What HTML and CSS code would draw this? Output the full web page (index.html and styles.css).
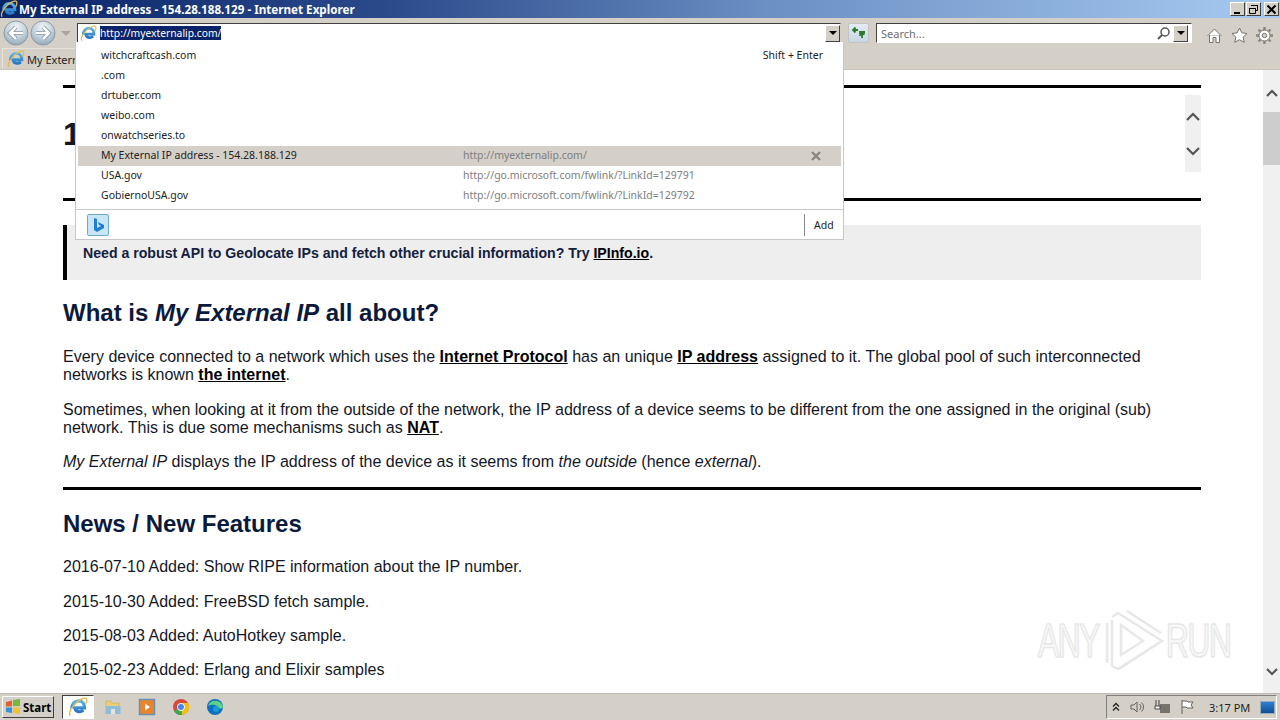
FILE: index.html
```html
<!DOCTYPE html>
<html lang="en">
<head>
<meta charset="utf-8">
<title>My External IP address</title>
<link rel="stylesheet" href="styles.css">
</head>
<body>
<svg class="defs" width="0" height="0" aria-hidden="true">
  <defs>
    <linearGradient id="ieblue" x1="0" y1="0" x2="0" y2="1"><stop offset="0" stop-color="#57b5e8"/><stop offset="1" stop-color="#2a78c4"/></linearGradient>
    <radialGradient id="gloss" cx="50%" cy="28%" r="75%"><stop offset="0" stop-color="#f4f7f9"/><stop offset="55%" stop-color="#c3d2dd"/><stop offset="100%" stop-color="#8ea6b8"/></radialGradient>
  </defs>
  <symbol id="ie" viewBox="0 0 20 20">
    <path d="M3.800 11.500C3.800 6.800 6.800 3.800 10.500 3.800s6 2.800 6 7H7c0 4.200 5 5 8.500 2.500" fill="none" stroke="url(#ieblue)" stroke-width="3.200"/>
    <path d="M2.500 18.500C-1.500 16 8 3 16 1.200c3.500-.7 3.300 3 1.300 6.500" fill="none" stroke="#e5b84c" stroke-width="1.400"/>
  </symbol>
  <symbol id="navback" viewBox="0 0 26 26">
    <circle cx="13" cy="13" r="12" fill="url(#gloss)" stroke="#8f9ba5"/>
    <path d="M20 13H8M13 7l-6 6 6 6" fill="none" stroke="#7c8c99" stroke-width="4.200"/>
    <path d="M20 13H8M13 7l-6 6 6 6" fill="none" stroke="#fff" stroke-width="2.600"/>
  </symbol>
</svg>
<div class="window">
  <header class="titlebar">
    <svg class="ico18"><use href="#ie"/></svg>
    <span class="title-text">My External IP address - 154.28.188.129 - Internet Explorer</span>
    <div class="wincontrols">
      <span class="winbtn"><svg width="11" height="11" viewBox="0 0 11 11"><rect x="2" y="8" width="6" height="2" fill="#000"/></svg></span>
      <span class="winbtn"><svg width="11" height="11" viewBox="0 0 11 11"><path d="M3.500 1.500h6v5h-2M1.500 4.500h6v5h-6z" fill="none" stroke="#000"/><path d="M3 1.500h7M1 4.500h7" stroke="#000"/></svg></span>
      <span class="winbtn"><svg width="11" height="11" viewBox="0 0 11 11"><path d="M1.500 1.500l8 8M9.500 1.500l-8 8" stroke="#000" stroke-width="2"/></svg></span>
    </div>
  </header>

  <section class="toolbar">
    <div class="navrow">
      <div class="navbtns">
        <svg class="round" width="26" height="26"><use href="#navback"/></svg>
        <svg class="round flip" width="26" height="26"><use href="#navback"/></svg>
        <span class="caret-light"></span>
      </div>
      <div class="addressbar">
        <svg class="ico16"><use href="#ie"/></svg>
        <span class="url-selected">http://myexternalip.com/</span>
        <span class="combo"><i class="caret"></i></span>
      </div>
      <span class="refresh"><svg width="16" height="14" viewBox="0 0 16 14"><path d="M7 4H2M4.500 1.500L2 4l2.500 2.500" fill="none" stroke="#2c7a2c" stroke-width="1.800"/><path d="M9 10V6h5M11 12l0-6M8.500 8.500L11 6l2.500 2.500" fill="none" stroke="#2c7a2c" stroke-width="1.800"/></svg></span>
      <div class="searchbar">
        <span class="search-ph">Search...</span>
        <svg class="lens" width="15" height="15" viewBox="0 0 15 15"><circle cx="9" cy="6" r="4" fill="none" stroke="#555" stroke-width="1.500"/><path d="M6 9l-4 4" stroke="#555" stroke-width="2"/></svg>
        <span class="combo"><i class="caret"></i></span>
      </div>
      <div class="tools">
        <svg width="17" height="17" viewBox="0 0 17 17"><path d="M1.500 9L8.500 2l7 7M3.500 8v7.500h3.500v-5h3v5h3.500V8" fill="#fff" stroke="#77736c"/></svg>
        <svg width="17" height="17" viewBox="0 0 17 17"><path d="M8.500 1l2.300 4.800 5.200.7-3.800 3.600 1 5.200-4.700-2.600-4.700 2.600 1-5.200L1 6.500l5.200-.7z" fill="#fff" stroke="#77736c"/></svg>
        <svg width="17" height="17" viewBox="0 0 17 17"><path d="M8.500 0v3M8.500 14v3M0 8.500h3M14 8.500h3M2.500 2.500l2 2M12.500 12.500l2 2M14.500 2.500l-2 2M4.500 12.500l-2 2" stroke="#8a867f" stroke-width="2.400"/><circle cx="8.500" cy="8.500" r="5.500" fill="#fff" stroke="#77736c" stroke-width="1"/><circle cx="8.500" cy="8.500" r="2.200" fill="#d4d0c8" stroke="#77736c"/></svg>
      </div>
    </div>
    <div class="tabrow">
      <div class="tab"><svg class="ico18"><use href="#ie"/></svg><span>My External IP address</span></div>
    </div>
    <div class="dropdown">
      <ul class="suggest">
        <li class="row"><span class="col-a">witchcraftcash.com</span><span class="hint">Shift + Enter</span></li>
        <li class="row"><span class="col-a">.com</span></li>
        <li class="row"><span class="col-a">drtuber.com</span></li>
        <li class="row"><span class="col-a">weibo.com</span></li>
        <li class="row"><span class="col-a">onwatchseries.to</span></li>
        <li class="row selected"><span class="col-a">My External IP address - 154.28.188.129</span><span class="col-b">http://myexternalip.com/</span><svg class="x" width="10" height="10" viewBox="0 0 10 10"><path d="M1 1l8 8M9 1L1 9" stroke="#85827c" stroke-width="2"/></svg></li>
        <li class="row"><span class="col-a">USA.gov</span><span class="col-b">http://go.microsoft.com/fwlink/?LinkId=129791</span></li>
        <li class="row"><span class="col-a">GobiernoUSA.gov</span><span class="col-b">http://go.microsoft.com/fwlink/?LinkId=129792</span></li>
      </ul>
      <div class="dropfoot">
        <span class="bing"><svg width="14" height="16" viewBox="0 0 14 16"><path d="M3 1l3 1v9l4-2-2-1-1-3 6 3v3l-7 4-3-2z" fill="#1f7fd6"/></svg></span>
        <span class="add">Add</span>
      </div>
    </div>
  </section>

  <div class="viewport">
    <main class="page">
      <hr class="rule first">
      <div class="ipbox">
        <div class="ip">154.28.188.129</div>
        <div class="ipscroll">
          <svg width="16" height="12" viewBox="0 0 16 12"><path d="M2 9l6-6 6 6" fill="none" stroke="#555" stroke-width="2.200"/></svg>
          <svg width="16" height="12" viewBox="0 0 16 12"><path d="M2 3l6 6 6-6" fill="none" stroke="#555" stroke-width="2.200"/></svg>
        </div>
      </div>
      <hr class="rule second">
      <blockquote class="note">Need a robust API to Geolocate IPs and fetch other crucial information? Try <a href="#">IPInfo.io</a>.</blockquote>
      <h2 class="about">What is <em>My External IP</em> all about?</h2>
      <p class="p1">Every device connected to a network which uses the <a href="#">Internet Protocol</a> has an unique <a href="#">IP address</a> assigned to it. The global pool of such interconnected networks is known <a href="#">the internet</a>.</p>
      <p>Sometimes, when looking at it from the outside of the network, the IP address of a device seems to be different from the one assigned in the original (sub) network. This is due some mechanisms such as <a href="#">NAT</a>.</p>
      <p><em>My External IP</em> displays the IP address of the device as it seems from <em>the outside</em> (hence <em>external</em>).</p>
      <hr class="rule third">
      <h2 class="news">News / New Features</h2>
      <p class="n1">2016-07-10 Added: Show RIPE information about the IP number.</p>
      <p>2015-10-30 Added: FreeBSD fetch sample.</p>
      <p>2015-08-03 Added: AutoHotkey sample.</p>
      <p>2015-02-23 Added: Erlang and Elixir samples</p>
    </main>
    <aside class="scrollbar">
      <svg width="14" height="10" viewBox="0 0 14 10"><path d="M2 8l5-5 5 5" fill="none" stroke="#555" stroke-width="2.200"/></svg>
      <div class="thumb"></div>
      <svg class="down" width="14" height="10" viewBox="0 0 14 10"><path d="M2 2l5 5 5-5" fill="none" stroke="#555" stroke-width="2.200"/></svg>
    </aside>
    <div class="watermark">
      <span class="wm-text">ANY</span>
      <svg class="wm-logo" width="60" height="64" viewBox="0 0 60 64"><path d="M2 14v40M7 11v46l6 3 44-28L13 4 7 8M16 16l22 16-22 14zM22 2l34 22M14 60l40-26" fill="none" stroke="#e8e8e8" stroke-width="2.500"/></svg>
      <span class="wm-text">RUN</span>
    </div>
  </div>

  <footer class="taskbar">
    <button class="start">
      <svg width="16" height="16" viewBox="0 0 16 16"><path d="M1 3l6-1.500V7.500H1z" fill="#e2622a"/><path d="M8 1l7-1v7H8z" fill="#79b63d"/><path d="M1 8.500h6V14l-6-1z" fill="#3a8fd6"/><path d="M8 8.500h7V15l-7-1z" fill="#f1c232"/></svg>
      <span>Start</span>
    </button>
    <span class="task active"><svg class="ico20"><use href="#ie"/></svg></span>
    <span class="task"><svg width="18" height="18" viewBox="0 0 18 18"><path d="M2 3h5l1 2h7v5H2z" fill="#e9cf7a" stroke="#c7a94f" stroke-width=".6"/><path d="M1.500 8h15v8h-15z" fill="#8fbcd6"/><path d="M7 11h4v5H7z" fill="#e8e4da"/></svg></span>
    <span class="task"><svg width="18" height="18" viewBox="0 0 18 18"><rect x="1.500" y="1.500" width="15" height="15" fill="#e8842c" stroke="#6a8fb5" stroke-width="1.500"/><path d="M7 5.500l5 3.500-5 3.500z" fill="#fff"/></svg></span>
    <span class="task"><svg width="18" height="18" viewBox="0 0 18 18"><circle cx="9" cy="9" r="8" fill="#d9483b"/><path d="M9 9L2 13a8 8 0 0 0 8 4z" fill="#3aa757"/><path d="M9 5h7a8 8 0 0 1-6 12z" fill="#f4c20d"/><circle cx="9" cy="9" r="3.600" fill="#4285f4" stroke="#fff"/></svg></span>
    <span class="task"><svg width="18" height="18" viewBox="0 0 18 18"><circle cx="9" cy="9" r="8" fill="#0f6fc0"/><path d="M2 8c2-7 12-7 15 0 .5 3-4 3.500-5 1.500C11 6 5 6 2 8z" fill="#5fd08a"/><circle cx="10" cy="11" r="3" fill="#1a9ad6"/></svg></span>
    <div class="tray">
      <svg width="8" height="10" viewBox="0 0 8 10"><path d="M1 4.500l3-3 3 3M1 8.500l3-3 3 3" fill="none" stroke="#222" stroke-width="1.300"/></svg>
      <svg width="16" height="16" viewBox="0 0 16 16"><path d="M2 6h3l3-3v10l-3-3H2z" fill="#d8d4cc" stroke="#66625b"/><path d="M10.500 5a4 4 0 0 1 0 6M12.500 3.500a6 6 0 0 1 0 9" fill="none" stroke="#66625b"/></svg>
      <svg width="18" height="16" viewBox="0 0 18 16"><rect x="7" y="5" width="10" height="9" fill="#77736c"/><path d="M3 1v6M6 1v6M2 7h5v3H2z" fill="#fff" stroke="#444"/></svg>
      <svg width="16" height="16" viewBox="0 0 16 16"><path d="M3 1v14M3 2h5l1 1h5l-2 3 2 3H8L7 8H3" fill="#fff" stroke="#66625b"/></svg>
      <span class="clock">3:17 PM</span>
      <span class="showdesk"></span>
    </div>
  </footer>
</div>
</body>
</html>
```

FILE: styles.css
```css
* { box-sizing: border-box; }
html, body { margin: 0; padding: 0; }
body { width: 1280px; height: 720px; overflow: hidden; font-family: "Liberation Sans", Arial, sans-serif; }
.defs { display: block; height: 0; }
.window { width: 1280px; height: 720px; display: flex; flex-direction: column; }
.ico20 { width: 20px; height: 20px; flex: none; }
.ico18 { width: 18px; height: 18px; flex: none; }
.ico16 { width: 17px; height: 17px; flex: none; }

.titlebar { height: 18px; flex: none; display: flex; align-items: center; background: linear-gradient(90deg, #0a246a 0%, #2a4a8a 30%, #6c8fc4 60%, #a6caf0 100%); }
.title-text { margin-left: 1px; font: bold 11.670px "Noto Sans", sans-serif; color: #fff; white-space: nowrap; }
.wincontrols { margin-left: auto; margin-right: 1px; display: flex; gap: 1px; }
.winbtn { width: 15px; height: 14px; background: #d4d0c8; display: flex; align-items: center; justify-content: center; border: 1px solid; border-color: #fff #404040 #404040 #fff; }
.wincontrols .winbtn:nth-child(2) { margin-right: 2px; }

.toolbar { position: relative; height: 52px; flex: none; background: #d4d0c8; border-bottom: 1px solid #c8c4bc; display: flex; flex-direction: column; }
.navrow { height: 28px; flex: none; display: flex; align-items: center; padding-top: 2px; }
.navbtns { width: 77px; padding-left: 3px; display: flex; align-items: center; gap: 1px; flex: none; }
.round { flex: none; }
.flip { transform: scaleX(-1); }
.caret-light { margin-left: 4px; border: 5px solid transparent; border-top: 5px solid #aaa69f; border-bottom: 0; }
.addressbar { width: 764px; height: 20px; flex: none; background: #fff; border: 1px solid; border-color: #404040 #d4d0c8 #fff #404040; display: flex; align-items: center; padding-left: 2px; }
.url-selected { margin-left: 3px; background: #0a246a; color: #fff; font: 10.300px/14px "Noto Sans", sans-serif; }
.combo { margin-left: auto; width: 15px; height: 17px; background: #d4d0c8; border: 1px solid; border-color: #fff #404040 #404040 #fff; display: flex; align-items: center; justify-content: center; }
.caret { border: 4px solid transparent; border-top: 4px solid #000; border-bottom: 0; }
.refresh { margin-left: 7px; width: 21px; height: 20px; flex: none; background: linear-gradient(#e6ecf3, #c7d5e3); border: 1px solid #c3c3c3; border-radius: 2px; display: flex; align-items: center; justify-content: center; }
.searchbar { margin-left: 7px; width: 316px; height: 20px; flex: none; background: #fff; border: 1px solid; border-color: #404040 #fff #fff #404040; display: flex; align-items: center; padding: 0 3px 0 4px; }
.search-ph { font: 11px "Noto Sans", sans-serif; color: #6d6d6d; }
.lens { margin-left: auto; margin-right: 2px; }
.searchbar .combo { margin-left: 0; }
.tools { margin-left: 14px; margin-top: 5px; display: flex; gap: 8px; }

.tabrow { height: 22px; margin-top: 2px; padding-left: 2px; }
.tab { display: flex; align-items: center; gap: 2px; height: 21px; width: 200px; padding-left: 4px; border-top: 1px solid #e6e3dc; border-left: 1px solid #e6e3dc; font: 11px "Noto Sans", sans-serif; color: #222; white-space: nowrap; overflow: hidden; }

.dropdown { position: absolute; z-index: 5; left: 75px; top: 24px; width: 769px; height: 198px; background: #fff; border: 1px solid #c6c6c6; border-top: 0; display: flex; flex-direction: column; }
.suggest { list-style: none; margin: 0; padding: 4px 2px 3px; height: 168px; border-bottom: 1px solid #c9c9c9; }
.row { position: relative; height: 20px; display: flex; align-items: center; padding-left: 23px; font: 10.500px "Noto Sans", sans-serif; color: #222; white-space: nowrap; }
.row span { position: relative; top: -1px; }
.row.selected { background: #d4cfc9; }
.col-a { width: 362px; flex: none; }
.col-b { color: #7e7e7e; }
.row .hint { position: absolute; right: 18px; top: 2px; }
.x { position: absolute; right: 20px; top: 5px; }
.dropfoot { flex: 1; display: flex; align-items: center; padding-left: 11px; }
.bing { width: 22px; height: 22px; background: #c9e6f6; border: 1px solid #6fa9c9; border-radius: 2px; display: flex; align-items: center; justify-content: center; }
.add { margin-left: auto; width: 39px; height: 22px; border-left: 1px solid #8a8a8a; font: 10.500px/22px "Noto Sans", sans-serif; color: #222; padding-left: 9px; }

.viewport { position: relative; flex: 1; min-height: 0; display: flex; overflow: hidden; background: #fff; }
.page { width: 1263px; flex: none; padding: 15px 62px 0 63px; color: #14171f; font-size: 16.020px; line-height: 18.400px; }
.page a { color: #000; font-weight: bold; text-decoration: underline; }
.page p { margin: 0 0 16px; }
.rule { border: 0; height: 3px; background: #000; margin: 0; }
.ipbox { height: 77px; margin-top: 7px; display: flex; justify-content: space-between; align-items: center; }
.ip { font-size: 32px; line-height: 40px; font-weight: bold; color: #14171f; white-space: nowrap; }
.ipscroll { align-self: stretch; width: 16px; background: #f0f0f0; display: flex; flex-direction: column; gap: 22px; align-items: center; padding-top: 16px; }
.second { margin-top: 26px; }
.note { margin: 24px 0 0; height: 55px; background: #eee; border-left: 4px solid #000; padding: 19px 16px 0; font-weight: bold; font-size: 14.130px; line-height: 18px; color: #14213d; }
.about { margin: 19px 0 19.700px; font-size: 24px; line-height: 28px; color: #0b1a3c; font-weight: bold; }
.third { margin-top: 2.300px; }
.news { margin: 20px 0 19.400px; font-size: 24px; line-height: 28px; color: #0b1a3c; font-weight: bold; }
.scrollbar { width: 17px; flex: none; background: #f0f0f0; display: flex; flex-direction: column; align-items: center; padding: 18px 0 16px; }
.thumb { width: 17px; height: 53px; margin-top: 14px; background: #cdcdcd; }
.down { margin-top: auto; }
.watermark { position: absolute; left: 1038px; top: 539px; display: flex; align-items: center; }
.wm-text { display: block; width: 63px; font-size: 48px; line-height: 64px; color: #f9f9f9; -webkit-text-stroke: 1.500px #e8e8e8; text-shadow: 0 0 2px #ddd; letter-spacing: -2px; transform: scaleX(.66); transform-origin: left center; white-space: nowrap; }
.wm-logo { flex: none; margin: 0 1px 0 4px; }

.taskbar { height: 27px; flex: none; background: #d4d0c8; border-top: 1px solid #bdb9b1; display: flex; align-items: center; padding-left: 2px; }
.start { width: 52px; height: 22px; padding: 0 0 0 2px; background: #d4d0c8; border: 1px solid; border-color: #fff #404040 #404040 #fff; display: flex; align-items: center; gap: 2px; font: bold 11.500px "Noto Sans", sans-serif; color: #000; }
.task { width: 34px; height: 24px; display: flex; align-items: center; justify-content: center; }
.task.active { margin-left: 8px; width: 32px; background: #fff; border: 1px solid; border-color: #404040 #fff #fff #404040; margin-right: 2px; }
.tray { margin-left: auto; margin-right: 3px; width: 171px; height: 24px; display: flex; align-items: center; padding-left: 5px; border: 1px solid; border-color: #808080 #fff #fff #808080; font: 11px "Noto Sans", sans-serif; color: #222; white-space: nowrap; }
.tray svg { margin-right: 8px; }
.tray svg:first-child { margin-right: 9px; }
.clock { margin-left: 6px; }
.showdesk { margin-left: auto; width: 15px; height: 13px; margin-right: 1px; background: linear-gradient(#2d7fd0, #0f4f95); border: 1px solid #9ab; }
```
